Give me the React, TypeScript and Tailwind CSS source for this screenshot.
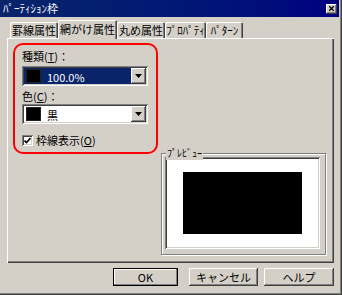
import React from "react";

const font = "font-['Noto_Sans_CJK_JP','Noto_Sans',sans-serif]";

const raised =
  "shadow-[inset_-1px_-1px_0_#404040,inset_1px_1px_0_#ffffff,inset_-2px_-2px_0_#808080]";
const sunken =
  "shadow-[inset_1px_1px_0_#808080,inset_-1px_-1px_0_#ffffff,inset_2px_2px_0_#404040,inset_-2px_-2px_0_#d4d0c8]";

const DropArrow = () => (
  <div
    className={`w-[15px] h-full bg-[#d4d0c8] flex items-center justify-center ${raised}`}
  >
    <svg width="7" height="4" viewBox="0 0 7 4">
      <path d="M0 0h7L3.5 4z" fill="#000" />
    </svg>
  </div>
);

interface ComboProps {
  text: string;
  selected?: boolean;
}

const Combo: React.FC<ComboProps> = ({ text, selected }) => (
  <div className={`w-[126px] h-[20px] bg-white p-[2px] flex ${sunken}`}>
    <div
      className={`flex-1 flex items-end pl-[2px] pb-[1px] ${
        selected ? "bg-[#0a246a] text-white" : "text-black"
      }`}
    >
      <div className="w-[15px] h-[14px] bg-black border border-[#202020] mb-[0px]" />
      <span className="ml-[6px] text-[11px] leading-[11px]">{text}</span>
    </div>
    <DropArrow />
  </div>
);

const tabs = [
  { label: "罫線属性", w: "w-[48px]" },
  { label: "網がけ属性", w: "w-[59px]", active: true },
  { label: "丸め属性", w: "w-[48px]" },
  { label: "ﾌﾟﾛﾊﾟﾃｨ", w: "w-[41px]" },
  { label: "ﾊﾟﾀｰﾝ", w: "w-[37px]" },
];

const Button: React.FC<{ label: string; w: string; ml: string; def?: boolean }> = ({
  label,
  w,
  ml,
  def,
}) => (
  <div
    className={`${w} ${ml} h-[18px] flex items-center justify-center text-[11px] text-black bg-[#d4d0c8] ${
      def
        ? "border border-black shadow-[inset_-1px_-1px_0_#808080,inset_1px_1px_0_#ffffff]"
        : raised
    }`}
  >
    {label}
  </div>
);

export default function App() {
  return (
    <div
      className={`w-[342px] h-[295px] bg-[#d4d0c8] flex flex-col text-black ${font} shadow-[inset_-1px_-1px_0_#404040,inset_-2px_-2px_0_#808080]`}
    >
      {/* title bar */}
      <div className="h-[17px] mr-[3px] bg-gradient-to-r from-[#0a246a] to-[#000080] flex items-center justify-between pl-[3px] pr-[2px]">
        <span className="text-white text-[11px] leading-none">ﾊﾟｰﾃｨｼｮﾝ枠</span>
        <div
          className={`w-[11px] h-[10px] bg-[#d4d0c8] flex items-center justify-center ${raised}`}
        >
          <svg width="5" height="5" viewBox="0 0 5 5">
            <path d="M0 0L5 5M5 0L0 5" stroke="#000" strokeWidth="1.3" />
          </svg>
        </div>
      </div>

      {/* tabs */}
      <div className="flex items-end h-[18px] mt-[3px] pl-[10px] relative z-10">
        {tabs.map((t) => (
          <div
            key={t.label}
            className={`${t.w} flex items-center justify-center text-[11px] leading-none rounded-t-[2px] bg-[#d4d0c8] ${
              t.active
                ? "h-[19px] -mb-px shadow-[inset_1px_1px_0_#ffffff,inset_-1px_0_0_#404040,inset_-2px_0_0_#808080]"
                : "h-[16px] shadow-[inset_1px_1px_0_#ffffff,inset_-1px_0_0_#404040,inset_-2px_0_0_#808080]"
            }`}
          >
            {t.label}
          </div>
        ))}
      </div>

      {/* panel */}
      <div
        className={`ml-[7px] w-[327px] h-[225px] flex pt-[5px] pl-[6px] shadow-[inset_1px_1px_0_#ffffff,inset_-1px_-1px_0_#404040,inset_-2px_-2px_0_#808080]`}
      >
        <div className="w-[145px] h-[111px] border-2 border-[#ff0000] rounded-[10px] pl-[7px] pt-[4px] flex flex-col">
          <span className="text-[11px] leading-[14px]">
            種類(<span className="underline">T</span>)：
          </span>
          <div className="mt-[3px]">
            <Combo text="100.0%" selected />
          </div>
          <span className="text-[11px] leading-[14px] mt-[3px]">
            色(<span className="underline">C</span>)：
          </span>
          <div className="mt-[1px]">
            <Combo text="黒" />
          </div>
          <div className="flex items-center mt-[11px]">
            <div className={`w-[11px] h-[11px] bg-white flex items-center justify-center ${sunken}`}>
              <svg width="7" height="7" viewBox="0 0 7 7">
                <path d="M0.5 3.5L2.5 5.5L6.5 1" stroke="#000" strokeWidth="1.6" fill="none" />
              </svg>
            </div>
            <span className="ml-[3px] text-[11px] leading-none">
              枠線表示(<span className="underline">O</span>)
            </span>
          </div>
        </div>

        <div className="ml-[3px] mt-[110px] w-[165px] h-[102px] relative border border-[#808080] shadow-[1px_1px_0_#ffffff,inset_1px_1px_0_#ffffff] pl-[3px] pt-[3px]">
          <span className="absolute -top-[8px] left-[4px] px-[1px] bg-[#d4d0c8] text-[10px] leading-[14px]">
            ﾌﾟﾚﾋﾞｭｰ
          </span>
          <div className={`w-[155px] h-[92px] bg-white pl-[18px] pt-[15px] ${sunken}`}>
            <div className="w-[119px] h-[62px] bg-black" />
          </div>
        </div>
      </div>

      {/* buttons */}
      <div className="flex mt-[5px]">
        <Button label="OK" w="w-[65px]" ml="ml-[113px]" def />
        <Button label="キャンセル" w="w-[69px]" ml="ml-[11px]" />
        <Button label="ヘルプ" w="w-[70px]" ml="ml-[6px]" />
      </div>
    </div>
  );
}
